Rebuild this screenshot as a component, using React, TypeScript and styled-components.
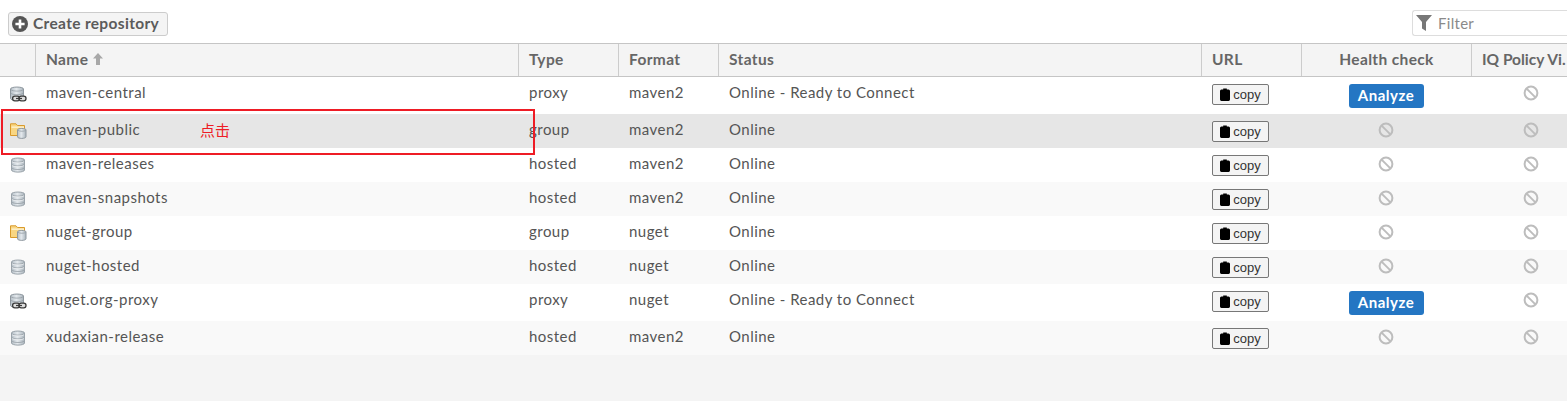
import React from "react";
import styled, { createGlobalStyle } from "styled-components";

const Global = createGlobalStyle`
  html, body { margin: 0; padding: 0; background: #f4f4f4; }
  body { font-family: Lato, "Open Sans", "Noto Sans CJK SC", sans-serif; overflow: hidden; }
`;

const COLS = "35px 483px 100px 100px 483px 100px 170px 120px";

const Page = styled.div`
  position: relative;
  width: 1567px;
  height: 401px;
  overflow: hidden;
  background: #f4f4f4;
`;

const Toolbar = styled.div`
  height: 43px;
  box-sizing: border-box;
  background: #fff;
  display: flex;
  align-items: flex-start;
  justify-content: space-between;
  padding: 12px 0 0 8px;
`;

const CreateButton = styled.button`
  height: 24px;
  width: 160px;
  box-sizing: border-box;
  display: flex;
  align-items: center;
  gap: 5px;
  padding: 0 0 0 3px;
  border: 1px solid #ccc;
  border-radius: 3px;
  background: #f4f4f4;
  color: #5b5b5b;
  font: 700 15.5px Lato, sans-serif;
  letter-spacing: 0.33px;
  span { position: relative; top: -1px; }
`;

const FilterBox = styled.div`
  width: 155px;
  height: 26px;
  box-sizing: border-box;
  margin: -2px 0 0 0;
  display: flex;
  align-items: center;
  gap: 6px;
  padding-left: 3px;
  border: 1px solid #ddd;
  border-right: none;
  border-radius: 3px 0 0 3px;
  background: #fff;
  color: #8a8a8a;
  font-size: 15px;
  letter-spacing: 0.3px;
`;

const Grid = styled.div`
  display: grid;
  grid-template-columns: ${COLS};
`;

const Header = styled(Grid)`
  height: 34px;
  box-sizing: border-box;
  background: #f4f4f4;
  border-top: 1px solid #c5c5c5;
  border-bottom: 1px solid #c5c5c5;
`;

const HeadCell = styled.div<{ $center?: boolean; $first?: boolean; $tight?: boolean }>`
  display: flex;
  align-items: center;
  justify-content: ${(p) => (p.$center ? "center" : "flex-start")};
  gap: 5px;
  box-sizing: border-box;
  padding: ${(p) => (p.$center ? "0 0 2px" : "0 0 2px 10px")};
  border-left: ${(p) => (p.$first ? "none" : "1px solid #ccc")};
  color: #666;
  font-weight: 700;
  font-size: 15.5px;
  letter-spacing: ${(p) => (p.$tight ? "0" : "0.36px")};
  white-space: nowrap;
  overflow: hidden;
`;

const Row = styled(Grid)<{ $tall?: boolean; $bg: string }>`
  height: ${(p) => (p.$tall ? 37 : 34)}px;
  background: ${(p) => p.$bg};
`;

const Cell = styled.div<{ $center?: boolean }>`
  display: flex;
  align-items: flex-start;
  justify-content: ${(p) => (p.$center ? "center" : "flex-start")};
  box-sizing: border-box;
  padding: ${(p) => (p.$center ? "7px 0 0" : "6px 0 0 11px")};
  color: #555;
  font-size: 15px;
  line-height: 19px;
  letter-spacing: 0.47px;
  white-space: nowrap;
`;

const IconCell = styled(Cell)`
  padding: 9px 0 0 10px;
`;

const CopyButton = styled.button`
  width: 57px;
  height: 21px;
  box-sizing: border-box;
  display: flex;
  align-items: center;
  justify-content: center;
  gap: 3px;
  padding: 0;
  background: #f4f4f4;
  border: 1px solid #777;
  border-radius: 2px;
  color: #333;
  font: 400 13px "Liberation Sans", Arial, sans-serif;
`;

const CopyCell = styled(Cell)`
  padding: 7px 0 0 11px;
`;

const AnalyzeButton = styled.button`
  width: 75px;
  height: 24px;
  padding: 0 0 2px;
  border: none;
  border-radius: 3px;
  background: #2476c3;
  color: #fff;
  font: 700 15px Lato, sans-serif;
  letter-spacing: 0.5px;
`;

const BanSlot = styled.span`
  display: block;
  height: 16px;
  margin-top: 1px;
`;

const GradientDefs = styled.svg`
  position: absolute;
  width: 0;
  height: 0;
`;

const Annotation = styled.div`
  position: absolute;
  left: 1px;
  top: 109px;
  width: 534px;
  height: 46px;
  box-sizing: border-box;
  border: 2px solid #ee1c25;
`;

const AnnotationText = styled.span`
  position: absolute;
  left: 197px;
  top: 10px;
  color: #ee1c25;
  font: 400 15px "Noto Sans CJK SC", sans-serif;
  line-height: 18px;
`;

const Defs = () => (
  <GradientDefs>
    <defs>
      <linearGradient id="cyl" x1="0" x2="1" y1="0" y2="0">
        <stop offset="0" stopColor="#b4bec6" />
        <stop offset="0.45" stopColor="#e4e9ed" />
        <stop offset="1" stopColor="#aab4bc" />
      </linearGradient>
    </defs>
  </GradientDefs>
);

const Hosted = () => (
  <svg width="16" height="16" viewBox="0 0 16 16">
    <path d="M1.5 3C1.5 .4 14.5 .4 14.5 3V13C14.5 15.8 1.5 15.8 1.5 13Z" fill="url(#cyl)" stroke="#9aa3aa" />
    <path d="M2 3.6C3 5.6 13 5.6 14 3.6M2 7.4C3 9.4 13 9.4 14 7.4M2 11C3 13 13 13 14 11" fill="none" stroke="#8e979e" strokeWidth=".7" />
    <path d="M2 4.6C3 6.4 13 6.4 14 4.6M2 8.4C3 10.2 13 10.2 14 8.4" fill="none" stroke="#f3f5f6" strokeWidth=".7" />
  </svg>
);

const Proxy = () => (
  <svg width="17" height="16" viewBox="0 0 17 16">
    <path d="M.5 3C.5 .4 13.5 .4 13.5 3V12.5C13.5 15 .5 15 .5 12.5Z" fill="url(#cyl)" stroke="#8f989f" />
    <path d="M1 3.6C2 5.6 12 5.6 13 3.6M1 7.2C2 9.2 12 9.2 13 7.2" fill="none" stroke="#8e979e" strokeWidth=".7" />
    <rect x="2.6" y="10.2" width="7" height="4.6" rx="2.2" fill="#ddd" stroke="#3a3a3a" strokeWidth="1.3" />
    <rect x="9" y="10.2" width="7" height="4.6" rx="2.2" fill="#ddd" stroke="#3a3a3a" strokeWidth="1.3" />
    <path d="M6 12.5h6" stroke="#3a3a3a" strokeWidth="1.2" />
  </svg>
);

const Group = () => (
  <svg width="17" height="16" viewBox="0 0 17 16">
    <path d="M.5 .8H6L7.5 2.5H14.5V12.5H.5Z" fill="#f8d683" stroke="#d99a2b" />
    <path d="M1.5 4.2H14" stroke="#fdf0c9" strokeWidth="1.5" />
    <path d="M7.5 6.8C7.5 5 16 5 16 6.8V13.8C16 15.9 7.5 15.9 7.5 13.8Z" fill="url(#cyl)" stroke="#8f989f" />
    <path d="M8 7.2C9 8.6 15 8.6 15.6 7.2" fill="none" stroke="#8e979e" strokeWidth=".7" />
  </svg>
);

const Ban = () => (
  <BanSlot>
    <svg width="16" height="16" viewBox="0 0 16 16" fill="none" stroke="#bdbdbd" strokeWidth="2">
      <circle cx="8" cy="8" r="6.4" />
      <path d="M3.6 3.6L12.4 12.4" />
    </svg>
  </BanSlot>
);

const Clip = () => (
  <svg width="10" height="13" viewBox="0 0 10 13">
    <path d="M3.2 1.5V.4H6.8V1.5H8.6Q10 1.5 10 3V11.6Q10 13 8.6 13H1.4Q0 13 0 11.6V3Q0 1.5 1.4 1.5Z" fill="#000" />
  </svg>
);

const PlusCircle = () => (
  <svg width="16" height="16" viewBox="0 0 16 16">
    <circle cx="8" cy="8" r="8" fill="#555" />
    <path d="M8 3.4V12.6M3.4 8H12.6" stroke="#fff" strokeWidth="2.6" />
  </svg>
);

const Funnel = () => (
  <svg width="16" height="16" viewBox="0 0 16 16">
    <path d="M0 0H16L10 7V16L6 13.5V7Z" fill="#777" />
  </svg>
);

const SortUp = () => (
  <svg width="10" height="12" viewBox="0 0 10 12">
    <path d="M5 0L10 5.5H7V12H3V5.5H0Z" fill="#a8a8a8" />
  </svg>
);

type Kind = "proxy" | "group" | "hosted";
const icons: Record<Kind, React.ReactNode> = {
  proxy: <Proxy />,
  group: <Group />,
  hosted: <Hosted />,
};

const rows: { name: string; kind: Kind; format: string; status: string; bg: string; tall?: boolean; analyze?: boolean }[] = [
  { name: "maven-central", kind: "proxy", format: "maven2", status: "Online - Ready to Connect", bg: "#fff", tall: true, analyze: true },
  { name: "maven-public", kind: "group", format: "maven2", status: "Online", bg: "#e6e6e6" },
  { name: "maven-releases", kind: "hosted", format: "maven2", status: "Online", bg: "#fff" },
  { name: "maven-snapshots", kind: "hosted", format: "maven2", status: "Online", bg: "#f9f9f9" },
  { name: "nuget-group", kind: "group", format: "nuget", status: "Online", bg: "#fff" },
  { name: "nuget-hosted", kind: "hosted", format: "nuget", status: "Online", bg: "#f9f9f9" },
  { name: "nuget.org-proxy", kind: "proxy", format: "nuget", status: "Online - Ready to Connect", bg: "#fff", tall: true, analyze: true },
  { name: "xudaxian-release", kind: "hosted", format: "maven2", status: "Online", bg: "#f9f9f9" },
];

export default function App() {
  return (
    <Page>
      <Global />
      <Defs />
      <Toolbar>
        <CreateButton>
          <PlusCircle />
          <span>Create repository</span>
        </CreateButton>
        <FilterBox>
          <Funnel />
          Filter
        </FilterBox>
      </Toolbar>
      <Header>
        <HeadCell $first />
        <HeadCell>
          Name <SortUp />
        </HeadCell>
        <HeadCell>Type</HeadCell>
        <HeadCell>Format</HeadCell>
        <HeadCell>Status</HeadCell>
        <HeadCell>URL</HeadCell>
        <HeadCell $center>Health check</HeadCell>
        <HeadCell $tight>IQ Policy Vi.</HeadCell>
      </Header>
      {rows.map((r) => (
        <Row key={r.name} $bg={r.bg} $tall={r.tall}>
          <IconCell>{icons[r.kind]}</IconCell>
          <Cell>{r.name}</Cell>
          <Cell>{r.kind}</Cell>
          <Cell>{r.format}</Cell>
          <Cell>{r.status}</Cell>
          <CopyCell>
            <CopyButton>
              <Clip />
              copy
            </CopyButton>
          </CopyCell>
          <Cell $center>{r.analyze ? <AnalyzeButton>Analyze</AnalyzeButton> : <Ban />}</Cell>
          <Cell $center><Ban /></Cell>
        </Row>
      ))}
      <Annotation>
        <AnnotationText>点击</AnnotationText>
      </Annotation>
    </Page>
  );
}
